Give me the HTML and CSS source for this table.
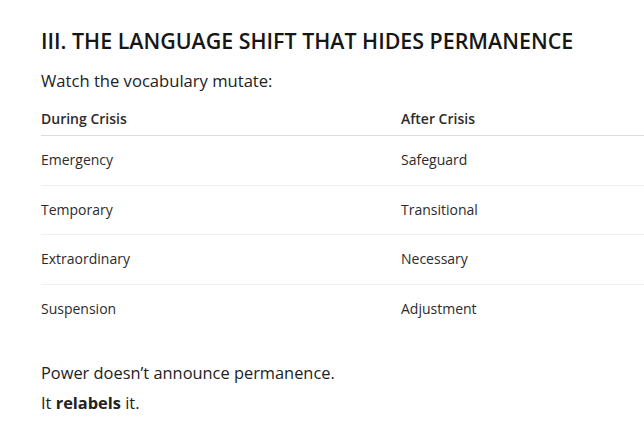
FILE: index.html
```html
<!DOCTYPE html>
<html lang="en">
<head>
<meta charset="utf-8">
<title>III. The Language Shift</title>
<link rel="stylesheet" href="styles.css">
</head>
<body>
<main class="page">
  <h2 class="title">III. THE LANGUAGE SHIFT THAT HIDES PERMANENCE</h2>
  <p class="lead">Watch the vocabulary mutate:</p>
  <table class="vocab">
    <thead>
      <tr><th>During Crisis</th><th>After Crisis</th></tr>
    </thead>
    <tbody>
      <tr><td>Emergency</td><td>Safeguard</td></tr>
      <tr><td>Temporary</td><td>Transitional</td></tr>
      <tr><td>Extraordinary</td><td>Necessary</td></tr>
      <tr><td>Suspension</td><td>Adjustment</td></tr>
    </tbody>
  </table>
  <p class="closing">Power doesn’t announce permanence.</p>
  <p class="closing">It <strong>relabels</strong> it.</p>
</main>
</body>
</html>
```
FILE: styles.css
```css
html, body {
  margin: 0;
  padding: 0;
  background: #ffffff;
  overflow: hidden;
}
.page {
  font-family: "Open Sans", "Noto Sans", sans-serif;
  color: #1f1f1f;
  padding: 26px 0 0 41px;
}
.title {
  font-size: 21.4px;
  font-weight: 600;
  line-height: 30px;
  margin: 0 0 12px;
  color: #161616;
}
.lead {
  font-size: 16.6px;
  line-height: 26px;
  margin: 0 0 14px;
  color: #222;
}
.vocab {
  width: 720px;
  border-collapse: collapse;
  font-size: 14px;
  color: #2b2b2b;
}
.vocab th {
  text-align: left;
  font-weight: 600;
  padding: 0 0 5px;
  line-height: 22px;
  border-bottom: 1px solid #dcdcdc;
  width: 50%;
}
.vocab td {
  padding: 13px 0;
  line-height: 22.5px;
  border-bottom: 1px solid #f0f0f0;
}
.vocab tbody tr:last-child td {
  border-bottom: none;
}
.closing {
  font-size: 16.4px;
  line-height: 30px;
  margin: 0;
  color: #222;
}
.vocab + .closing {
  margin-top: 25px;
}
```
